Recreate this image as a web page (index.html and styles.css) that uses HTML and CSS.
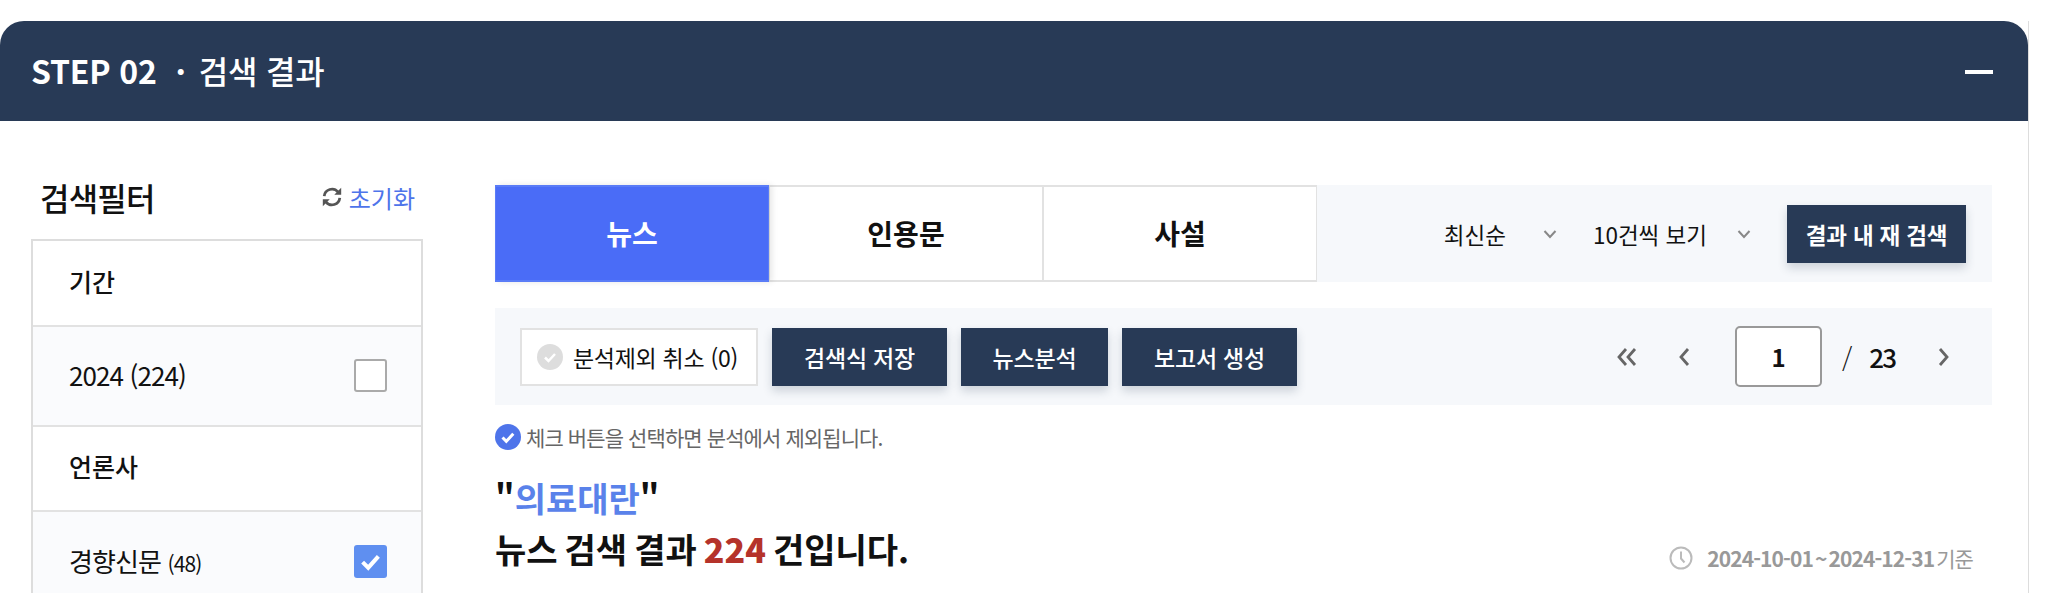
FILE: index.html
```html
<!DOCTYPE html>
<html lang="ko">
<head>
    <meta charset="UTF-8">
    <meta name="viewport" content="width=device-width, initial-scale=1.0">
    <title>검색 결과</title>
    <link rel="stylesheet" href="styles.css">
</head>
<body>
    <section class="panel">
        <header class="panel-head">
            <h2 class="panel-title">STEP 02<span class="title-dot">·</span><span class="title-name">검색 결과</span></h2>
            <span class="collapse"></span>
        </header>

        <div class="panel-body">
            <aside class="filter">
                <div class="filter-head">
                    <h3 class="filter-title">검색필터</h3>
                    <a class="reset">
                        <svg class="reset-icon" viewBox="0 0 24 24" fill="none" stroke="#555" stroke-width="3">
                            <path d="M3.500 11A8.500 8.500 0 0 1 18.500 6.500"/>
                            <path d="M20.500 13A8.500 8.500 0 0 1 5.500 17.500"/>
                            <path d="M22 2v7.500h-7.500z" fill="#555" stroke="none"/>
                            <path d="M2 22v-7.500h7.500z" fill="#555" stroke="none"/>
                        </svg>
                        초기화
                    </a>
                </div>
                <div class="filter-box">
                    <div class="group-name">기간</div>
                    <div class="option">
                        <span class="option-name">2024 (224)</span>
                        <span class="check"></span>
                    </div>
                    <div class="group-name">언론사</div>
                    <div class="option">
                        <span class="option-name">경향신문 <small>(48)</small></span>
                        <span class="check checked">
                            <svg viewBox="0 0 24 24" fill="none" stroke="#fff" stroke-width="3.600"><path d="M5 12.500l5 5 9-10"/></svg>
                        </span>
                    </div>
                </div>
            </aside>

            <main class="results">
                <div class="tab-bar">
                    <div class="tabs">
                        <a class="tab active">뉴스</a>
                        <a class="tab">인용문</a>
                        <a class="tab">사설</a>
                    </div>
                    <div class="sort">
                        <span class="select select-first">최신순
                            <svg class="chevron" viewBox="0 0 14 10" fill="none" stroke="#888" stroke-width="2"><path d="M1.500 2l5.500 6 5.500-6"/></svg>
                        </span>
                        <span class="select">10건씩 보기
                            <svg class="chevron" viewBox="0 0 14 10" fill="none" stroke="#888" stroke-width="2"><path d="M1.500 2l5.500 6 5.500-6"/></svg>
                        </span>
                        <button class="btn btn-search">결과 내 재 검색</button>
                    </div>
                </div>

                <div class="action-bar">
                    <div class="actions">
                        <button class="btn-exclude">
                            <svg class="exclude-icon" viewBox="0 0 26 26"><circle cx="13" cy="13" r="13" fill="#ddd"/><path d="M8 13.500l3.500 3.500 6.500-7" fill="none" stroke="#fff" stroke-width="2.500"/></svg>
                            분석제외 취소 (0)
                        </button>
                        <button class="btn btn-save">검색식 저장</button>
                        <button class="btn btn-news">뉴스분석</button>
                        <button class="btn btn-report">보고서 생성</button>
                    </div>
                    <div class="pager">
                        <svg class="page-first" viewBox="0 0 22 20" fill="none" stroke="#666" stroke-width="2.800"><path d="M10 2l-7 8 7 8"/><path d="M19 2l-7 8 7 8"/></svg>
                        <svg class="page-prev" viewBox="0 0 14 20" fill="none" stroke="#666" stroke-width="2.800"><path d="M11 2l-7 8 7 8"/></svg>
                        <span class="page-input">1</span>
                        <span class="page-slash">/</span>
                        <span class="page-total">23</span>
                        <svg class="page-next" viewBox="0 0 14 20" fill="none" stroke="#666" stroke-width="2.800"><path d="M3 2l7 8-7 8"/></svg>
                    </div>
                </div>

                <p class="note">
                    <svg class="note-icon" viewBox="0 0 26 26"><circle cx="13" cy="13" r="13" fill="#4e74ea"/><path d="M7.500 13.500l3.800 3.800 7-7.500" fill="none" stroke="#fff" stroke-width="3"/></svg>
                    체크 버튼을 선택하면 분석에서 제외됩니다.
                </p>

                <div class="summary">
                    <h3 class="summary-title">"<em>의료대란</em>"<br>뉴스 검색 결과 <strong>224</strong> 건입니다.</h3>
                    <div class="period">
                        <svg class="clock" viewBox="0 0 24 24" fill="none" stroke="#bbb" stroke-width="2"><circle cx="12" cy="12" r="10.500"/><path d="M12 5.500v7l3.500 4"/></svg>
                        <span><b>2024-10-01 ~ 2024-12-31</b> 기준</span>
                    </div>
                </div>
            </main>
        </div>
    </section>
</body>
</html>
```

FILE: styles.css
```css
* {
    box-sizing: border-box;
}
html, body {
    height: 100%;
    overflow: hidden;
}
body {
    margin: 0;
    padding-top: 21px;
    background-color: white;
    color: #111;
    font-family: "Noto Sans CJK KR", "Noto Sans", sans-serif;
}
button {
    font-family: inherit;
    border: none;
    cursor: pointer;
}
h2, h3, p {
    margin: 0;
}

/* panel */
.panel {
    width: 2029px;
    border-right: 1px solid #ddd;
}
.panel-head {
    display: flex;
    align-items: center;
    justify-content: space-between;
    height: 100px;
    padding: 0 35px 0 31px;
    background-color: #283a56;
    border-radius: 24px 24px 0 0;
    color: white;
}
.panel-title {
    font-size: 32px;
    font-weight: 700;
    line-height: 1;
    letter-spacing: -0.2px;
    margin-bottom: 2px;
}
.title-dot {
    margin: 0 13px 0 19px;
}
.title-name {
    font-weight: 500;
}
.collapse {
    width: 28px;
    height: 4px;
    margin-top: 2px;
    background-color: white;
}
.panel-body {
    display: flex;
    padding: 0 36px 0 31px;
}

/* filter */
.filter {
    width: 392px;
    margin-right: 72px;
}
.filter-head {
    display: flex;
    align-items: center;
    justify-content: space-between;
    height: 118px;
    padding: 34px 8px 0 9px;
}
.filter-title {
    font-size: 32px;
    font-weight: 500;
    letter-spacing: -0.8px;
}
.reset {
    display: flex;
    align-items: center;
    gap: 6px;
    font-size: 24px;
    color: #4e74ea;
}
.reset-icon {
    width: 22px;
    height: 22px;
}
.filter-box {
    border: 2px solid #ddd;
}
.group-name {
    display: flex;
    align-items: center;
    height: 83.5px;
    padding: 0 0 4px 36px;
    font-size: 25px;
    font-weight: 500;
    background-color: white;
}
.option {
    display: flex;
    align-items: center;
    justify-content: space-between;
    height: 102px;
    padding: 0 34px 0 36px;
    font-size: 26px;
    background-color: #fafbfd;
    border-top: 2px solid #e2e2e2;
    border-bottom: 2px solid #e2e2e2;
}
.option-name {
    padding-bottom: 2px;
    letter-spacing: -0.9px;
}
.option-name small {
    font-size: 21px;
}
.check {
    width: 33px;
    height: 33px;
    background-color: white;
    border: 2px solid #aaa;
    border-radius: 3px;
}
.check.checked {
    padding: 3px;
    background-color: #5f8ff0;
    border: none;
}
.check svg {
    display: block;
}

/* results */
.results {
    flex: 1;
    padding-top: 64px;
}
.tab-bar {
    display: flex;
    justify-content: space-between;
    height: 97px;
    background-color: #f6f8fb;
}
.tabs {
    display: flex;
}
.tab {
    display: flex;
    align-items: center;
    justify-content: center;
    width: 274px;
    height: 97px;
    padding-bottom: 2px;
    font-size: 28px;
    font-weight: 700;
    background-color: white;
    border: 2px solid #e2e2e2;
    border-left-width: 1px;
    border-right-width: 1px;
}
.tab.active {
    position: relative;
    color: white;
    background-color: #4a6cf7;
    border-color: #5a7cf7;
    box-shadow: 3px 0 6px rgba(0, 0, 0, 0.1);
}
.sort {
    display: flex;
    align-items: center;
    padding-right: 26px;
    font-size: 22.5px;
}
.select {
    display: flex;
    align-items: center;
    margin-right: 36px;
}
.select-first .chevron {
    margin-left: 37px;
}
.chevron {
    width: 14px;
    height: 10px;
    margin-left: 30px;
}
.btn {
    height: 58px;
    font-size: 23px;
    font-weight: 500;
    letter-spacing: -0.2px;
    color: white;
    background-color: #283a56;
    box-shadow: 0 5px 9px rgba(40, 58, 86, 0.2);
}
.btn-search {
    width: 179px;
    font-size: 22.5px;
    font-weight: 700;
}
.action-bar {
    display: flex;
    align-items: center;
    justify-content: space-between;
    height: 97px;
    margin-top: 26px;
    padding: 0 41px 0 25px;
    background-color: #f6f8fb;
}
.actions {
    display: flex;
    align-items: center;
    gap: 14px;
}
.btn-exclude {
    display: flex;
    align-items: center;
    gap: 10px;
    width: 238px;
    height: 58px;
    padding-left: 15px;
    font-size: 23px;
    letter-spacing: -0.3px;
    color: #111;
    background-color: white;
    border: 2px solid #e2e2e2;
}
.exclude-icon {
    width: 26px;
    height: 26px;
}
.btn-save, .btn-report {
    width: 175px;
}
.btn-news {
    width: 147px;
}
.pager {
    display: flex;
    align-items: center;
}
.pager svg {
    height: 20px;
}
.page-first {
    width: 22px;
}
.page-prev, .page-next {
    width: 14px;
}
.page-prev {
    margin-left: 39px;
}
.page-input {
    display: flex;
    align-items: center;
    justify-content: center;
    width: 87px;
    height: 61px;
    margin-left: 44px;
    font-size: 24px;
    font-weight: 700;
    background-color: white;
    border: 2px solid #999;
    border-radius: 5px;
}
.page-slash {
    margin-left: 20px;
    font-size: 26px;
    font-weight: 300;
}
.page-total {
    margin-left: 17px;
    font-size: 26px;
    font-weight: 500;
    letter-spacing: -2px;
}
.page-next {
    margin-left: 42px;
}
.note {
    display: flex;
    align-items: center;
    gap: 5px;
    height: 26px;
    margin-top: 19px;
    font-size: 21px;
    letter-spacing: -0.9px;
    color: #666;
}
.note-icon {
    width: 26px;
    height: 26px;
}
.summary {
    display: flex;
    align-items: flex-end;
    justify-content: space-between;
    margin-top: 22px;
    padding-right: 19px;
}
.summary-title {
    font-size: 34px;
    font-weight: 700;
    line-height: 51px;
    word-spacing: -2.5px;
}
.summary-title em {
    font-style: normal;
    color: #5a82ea;
}
.summary-title strong {
    color: #b5332a;
}
.period {
    display: flex;
    align-items: center;
    height: 32px;
    font-size: 21px;
    letter-spacing: -0.9px;
    word-spacing: -3px;
    color: #999;
}
.period b {
    font-weight: 700;
}
.clock {
    width: 24px;
    height: 24px;
    margin-right: 14px;
}
```
